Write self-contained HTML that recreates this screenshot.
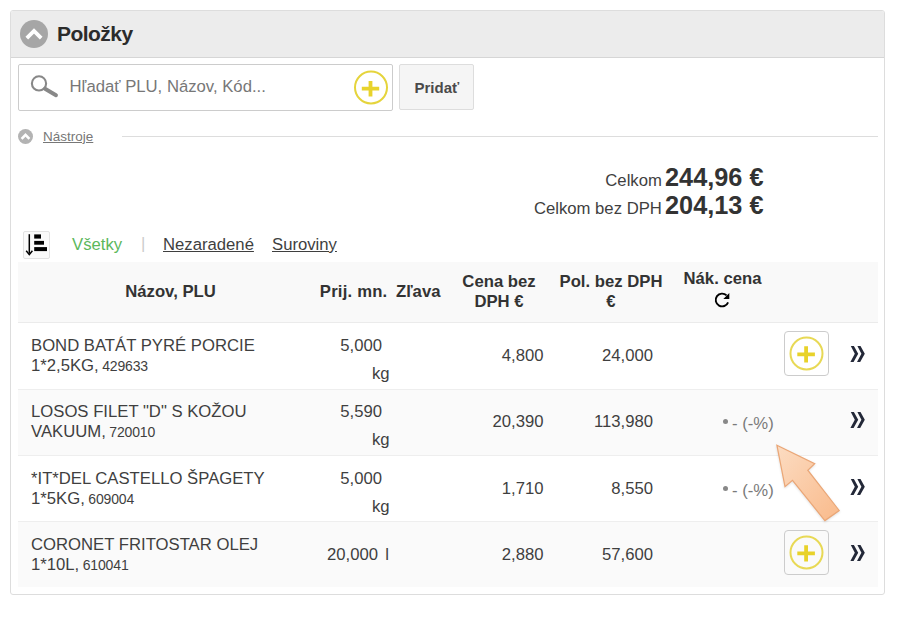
<!DOCTYPE html>
<html><head><meta charset="utf-8">
<style>
*{box-sizing:border-box;margin:0;padding:0}
html,body{width:918px;height:626px;background:#fff;overflow:hidden}
body{font-family:"Liberation Sans",sans-serif;color:#333;position:relative}
.abs{position:absolute}
.t{position:absolute;white-space:nowrap;line-height:1}
</style></head><body>
<div class="abs" style="left:10px;top:10px;width:875px;height:585px;border:1px solid #ddd;border-radius:3px;background:#fff"></div>
<div class="abs" style="left:11px;top:11px;width:873px;height:47px;background:#ececec;border-bottom:1px solid #d6d6d6;border-radius:2px 2px 0 0"></div>
<svg class="abs" style="left:20px;top:20px" width="28" height="28" viewBox="0 0 28 28">
  <circle cx="14" cy="14" r="14" fill="#a6a6a6"/>
  <path d="M6.8 18.2 L14 11 L21.2 18.2" stroke="#fff" stroke-width="3.8" fill="none"/>
</svg>
<div class="t" style="left:57px;top:23px;font-size:21px;color:#2b2b2b;font-weight:bold;letter-spacing:-0.55px;">Položky</div>
<div class="abs" style="left:18px;top:64px;width:375px;height:47px;border:1px solid #ccc;border-radius:2px;background:#fff"></div>
<svg class="abs" style="left:28px;top:72px" width="32" height="28" viewBox="0 0 32 28">
  <circle cx="11" cy="11.4" r="7.1" stroke="#888" stroke-width="2.1" fill="none"/>
  <path d="M17 16.8 L28 23.2" stroke="#888" stroke-width="3.9" stroke-linecap="round"/>
</svg>
<div class="t" style="left:69.5px;top:79px;font-size:16.7px;color:#777;">Hľadať PLU, Názov, Kód...</div>
<svg class="abs" style="left:353px;top:70px" width="36" height="36" viewBox="0 0 36 36">
  <circle cx="18" cy="17.5" r="16" stroke="#e5d43c" stroke-width="2" fill="#fff"/>
  <path d="M8.8 18.7 H26.2 M17.5 10.9 V26.5" stroke="#e8d32c" stroke-width="3.8"/>
</svg>
<div class="abs" style="left:399px;top:64px;width:75px;height:46px;border:1px solid #ddd;border-radius:2px;background:#f5f5f5"></div>
<div class="t" style="left:414.5px;top:80px;font-size:15px;color:#4a4a4a;font-weight:bold;">Pridať</div>
<svg class="abs" style="left:18px;top:129px" width="15" height="15" viewBox="0 0 15 15">
  <circle cx="7.5" cy="7.5" r="7.5" fill="#b3b3b3"/>
  <path d="M3.6 9.8 L7.5 5.9 L11.4 9.8" stroke="#fff" stroke-width="2.6" fill="none"/>
</svg>
<div class="t" style="left:43px;top:129.5px;font-size:13.5px;color:#777;text-decoration:underline;">Nástroje</div>
<div class="abs" style="left:122px;top:136px;width:756px;height:1px;background:#ddd"></div>
<div class="t" style="right:154.5px;top:165px;font-size:25px;color:#3f3f3f;font-size:16.7px;">Celkom <b style="font-size:25.3px;color:#333;margin-left:-1.5px">244,96 €</b></div>
<div class="t" style="right:154.5px;top:193px;font-size:25px;color:#3f3f3f;font-size:16.7px;">Celkom bez DPH <b style="font-size:25.3px;color:#333;margin-left:-1.5px">204,13 €</b></div>
<div class="abs" style="left:23px;top:231px;width:27px;height:28px;border:1px solid #e2e2e2;border-radius:2px;background:#fafafa"></div>
<svg class="abs" style="left:23px;top:231px" width="27" height="27" viewBox="0 0 27 27">
  <path d="M6.3 3.2 V22.5" stroke="#000" stroke-width="1.5"/>
  <path d="M3.2 19.8 L6.3 23.6 L9.4 19.8" stroke="#000" stroke-width="1.5" fill="none"/>
  <rect x="11.2" y="3.4" width="6.8" height="4.2" fill="#000"/>
  <rect x="11.2" y="9.9" width="9.8" height="3.8" fill="#000"/>
  <rect x="11.2" y="16.1" width="12.8" height="4" fill="#000"/>
</svg>
<div class="t" style="left:72px;top:237px;font-size:16.7px;color:#5cb85c;">Všetky</div>
<div class="t" style="left:141px;top:235.5px;font-size:16.7px;color:#ccc;">|</div>
<div class="t" style="left:163px;top:237px;font-size:16.7px;color:#3f3f3f;text-decoration:underline;">Nezaradené</div>
<div class="t" style="left:272px;top:237px;font-size:16.7px;color:#3f3f3f;text-decoration:underline;">Suroviny</div>
<div class="abs" style="left:18px;top:262px;width:860px;height:61px;background:#f9f9f9;border-bottom:1px solid #ebebeb"></div>
<div class="abs" style="left:18px;top:323px;width:860px;height:66px;background:#fff"></div>
<div class="abs" style="left:18px;top:390px;width:860px;height:65px;background:#fafafa"></div>
<div class="abs" style="left:18px;top:456px;width:860px;height:65px;background:#fff"></div>
<div class="abs" style="left:18px;top:522px;width:860px;height:65px;background:#fafafa"></div>
<div class="abs" style="left:18px;top:389px;width:860px;height:1px;background:#eee"></div>
<div class="abs" style="left:18px;top:455px;width:860px;height:1px;background:#eee"></div>
<div class="abs" style="left:18px;top:521px;width:860px;height:1px;background:#eee"></div>
<div class="t" style="left:20.5px;width:300px;text-align:center;top:284px;font-size:16.7px;color:#333;font-weight:bold;">Názov, PLU</div>
<div class="t" style="left:319.8px;top:283.7px;font-size:16.7px;color:#333;font-weight:bold;letter-spacing:0.2px;">Prij. mn.</div>
<div class="t" style="left:396px;top:283.7px;font-size:16.7px;color:#333;font-weight:bold;">Zľava</div>
<div class="t" style="left:349px;width:300px;text-align:center;top:274px;font-size:16.7px;color:#333;font-weight:bold;">Cena bez</div>
<div class="t" style="left:349px;width:300px;text-align:center;top:294px;font-size:16.7px;color:#333;font-weight:bold;">DPH €</div>
<div class="t" style="left:461px;width:300px;text-align:center;top:274px;font-size:16.7px;color:#333;font-weight:bold;">Pol. bez DPH</div>
<div class="t" style="left:461px;width:300px;text-align:center;top:294px;font-size:16.7px;color:#333;font-weight:bold;">€</div>
<div class="t" style="left:572.5px;width:300px;text-align:center;top:271px;font-size:16.7px;color:#333;font-weight:bold;">Nák. cena</div>
<svg class="abs" style="left:712px;top:290px" width="20" height="20" viewBox="712 290 20 20">
  <path d="M728.1 302.3 A6.4 6.4 0 1 1 726.6 295.4" stroke="#000" stroke-width="1.9" fill="none"/>
  <path d="M729.3 293 L729.3 299 L723.3 299 Z" fill="#000"/>
</svg>
<div class="t" style="left:31px;top:338px;font-size:16.7px;color:#3f3f3f;">BOND BATÁT PYRÉ PORCIE</div>
<div class="t" style="left:31px;top:358px;font-size:16.7px;color:#3f3f3f;">1*2,5KG, <span style="font-size:14px;letter-spacing:-0.15px;margin-left:-1.2px">429633</span></div>
<div class="t" style="right:536px;top:338px;font-size:16.7px;color:#3f3f3f;">5,000</div>
<div class="t" style="right:528.5px;top:366px;font-size:16.7px;color:#3f3f3f;">kg</div>
<div class="t" style="right:374.5px;top:348px;font-size:16.7px;color:#3f3f3f;">4,800</div>
<div class="t" style="right:265px;top:348px;font-size:16.7px;color:#3f3f3f;">24,000</div>
<div class="abs" style="left:784px;top:331px;width:45px;height:45px;border:1px solid #ccc;border-radius:4px"></div>
<svg class="abs" style="left:789px;top:336px" width="35" height="35" viewBox="0 0 35 35">
  <circle cx="17.5" cy="17.5" r="16" stroke="#e8d955" stroke-width="2" fill="none"/>
  <path d="M8.3 18.3 H25.9 M17.1 10.3 V26.4" stroke="#e8d22a" stroke-width="3.8"/>
</svg>
<svg class="abs" style="left:845px;top:340px" width="25" height="28" viewBox="845 340 25 28">
  <polygon points="850.8,346 853.9,346 858.2,353.8 853.6,362 850.4,362 854.8,353.8" fill="#232838"/>
  <polygon points="857.4,346 860.5,346 864.8,353.8 860.2,362 857,362 861.4,353.8" fill="#232838"/>
</svg>
<div class="t" style="left:31px;top:404px;font-size:16.7px;color:#3f3f3f;">LOSOS FILET "D" S KOŽOU</div>
<div class="t" style="left:31px;top:424px;font-size:16.7px;color:#3f3f3f;">VAKUUM, <span style="font-size:14px;letter-spacing:-0.15px;margin-left:-1.2px">720010</span></div>
<div class="t" style="right:536px;top:404px;font-size:16.7px;color:#3f3f3f;">5,590</div>
<div class="t" style="right:528.5px;top:432px;font-size:16.7px;color:#3f3f3f;">kg</div>
<div class="t" style="right:374.5px;top:414px;font-size:16.7px;color:#3f3f3f;">20,390</div>
<div class="t" style="right:265px;top:414px;font-size:16.7px;color:#3f3f3f;">113,980</div>
<div class="abs" style="left:722.5px;top:419px;width:5px;height:5px;border-radius:50%;background:#888"></div>
<div class="t" style="left:732px;top:416px;font-size:16.7px;color:#7a7a7a;">- (-%)</div>
<svg class="abs" style="left:845px;top:406px" width="25" height="28" viewBox="845 340 25 28">
  <polygon points="850.8,346 853.9,346 858.2,353.8 853.6,362 850.4,362 854.8,353.8" fill="#232838"/>
  <polygon points="857.4,346 860.5,346 864.8,353.8 860.2,362 857,362 861.4,353.8" fill="#232838"/>
</svg>
<div class="t" style="left:31px;top:471px;font-size:16.7px;color:#3f3f3f;">*IT*DEL CASTELLO ŠPAGETY</div>
<div class="t" style="left:31px;top:491px;font-size:16.7px;color:#3f3f3f;">1*5KG, <span style="font-size:14px;letter-spacing:-0.15px;margin-left:-1.2px">609004</span></div>
<div class="t" style="right:536px;top:471px;font-size:16.7px;color:#3f3f3f;">5,000</div>
<div class="t" style="right:528.5px;top:499px;font-size:16.7px;color:#3f3f3f;">kg</div>
<div class="t" style="right:374.5px;top:481px;font-size:16.7px;color:#3f3f3f;">1,710</div>
<div class="t" style="right:265px;top:481px;font-size:16.7px;color:#3f3f3f;">8,550</div>
<div class="abs" style="left:722.5px;top:486px;width:5px;height:5px;border-radius:50%;background:#888"></div>
<div class="t" style="left:732px;top:483px;font-size:16.7px;color:#7a7a7a;">- (-%)</div>
<svg class="abs" style="left:845px;top:473px" width="25" height="28" viewBox="845 340 25 28">
  <polygon points="850.8,346 853.9,346 858.2,353.8 853.6,362 850.4,362 854.8,353.8" fill="#232838"/>
  <polygon points="857.4,346 860.5,346 864.8,353.8 860.2,362 857,362 861.4,353.8" fill="#232838"/>
</svg>
<div class="t" style="left:31px;top:537px;font-size:16.7px;color:#3f3f3f;">CORONET FRITOSTAR OLEJ</div>
<div class="t" style="left:31px;top:557px;font-size:16.7px;color:#3f3f3f;">1*10L, <span style="font-size:14px;letter-spacing:-0.15px;margin-left:-1.2px">610041</span></div>
<div class="t" style="right:540px;top:547px;font-size:16.7px;color:#3f3f3f;">20,000</div>
<div class="t" style="right:529px;top:547px;font-size:16.7px;color:#3f3f3f;">l</div>
<div class="t" style="right:374.5px;top:547px;font-size:16.7px;color:#3f3f3f;">2,880</div>
<div class="t" style="right:265px;top:547px;font-size:16.7px;color:#3f3f3f;">57,600</div>
<div class="abs" style="left:784px;top:530px;width:45px;height:45px;border:1px solid #ccc;border-radius:4px"></div>
<svg class="abs" style="left:789px;top:535px" width="35" height="35" viewBox="0 0 35 35">
  <circle cx="17.5" cy="17.5" r="16" stroke="#e8d955" stroke-width="2" fill="none"/>
  <path d="M8.3 18.3 H25.9 M17.1 10.3 V26.4" stroke="#e8d22a" stroke-width="3.8"/>
</svg>
<svg class="abs" style="left:845px;top:539px" width="25" height="28" viewBox="845 340 25 28">
  <polygon points="850.8,346 853.9,346 858.2,353.8 853.6,362 850.4,362 854.8,353.8" fill="#232838"/>
  <polygon points="857.4,346 860.5,346 864.8,353.8 860.2,362 857,362 861.4,353.8" fill="#232838"/>
</svg>
<svg class="abs" style="left:760px;top:430px;filter:drop-shadow(0.5px 1px 1px rgba(0,0,0,0.12))" width="100" height="100" viewBox="760 430 100 100">
  <defs><linearGradient id="ag" x1="0" y1="0" x2="1" y2="1"><stop offset="0" stop-color="#fcdcc2"/><stop offset="1" stop-color="#f9ba8b"/></linearGradient></defs>
  <polygon points="776.9,445.2 814.7,463.7 807.8,470.2 839.2,510.5 824.9,520.6 792.5,480.4 785,486.6" fill="url(#ag)" stroke="#eaa676" stroke-width="1.2" stroke-linejoin="miter"/>
</svg>

</body></html>
